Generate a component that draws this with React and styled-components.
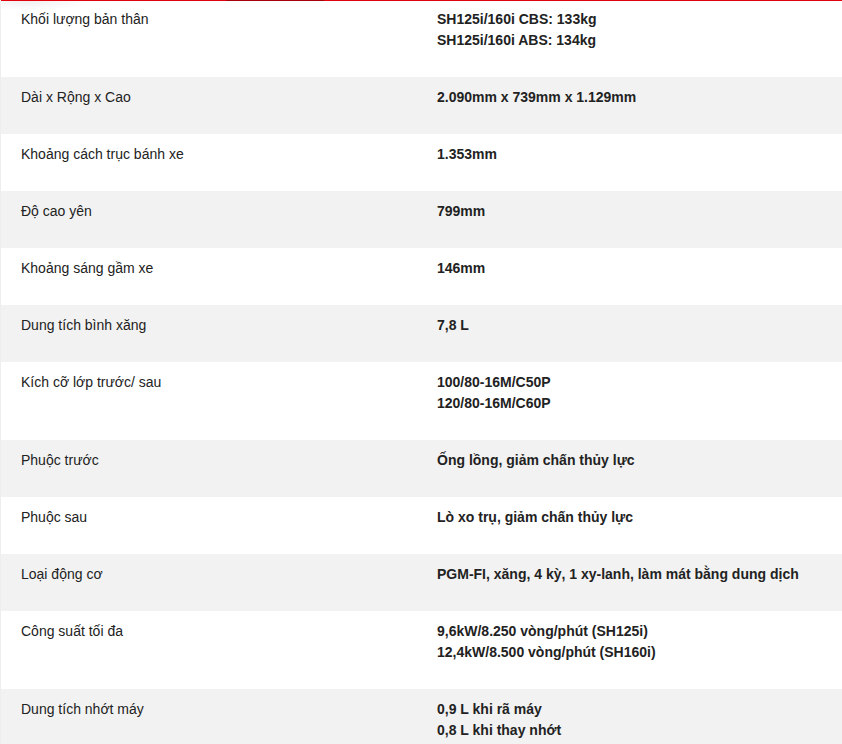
import styled, { createGlobalStyle } from 'styled-components';

const GlobalStyle = createGlobalStyle`
    html, body {
        margin: 0;
        padding: 0;
        background: #fff;
    }
    body {
        font-family: "Liberation Sans", Arial, sans-serif;
        color: #222;
    }
`;

// thông số kỹ thuật
const SPECS = [
    ['Khối lượng bản thân', ['SH125i/160i CBS: 133kg', 'SH125i/160i ABS: 134kg']],
    ['Dài x Rộng x Cao', ['2.090mm x 739mm x 1.129mm']],
    ['Khoảng cách trục bánh xe', ['1.353mm']],
    ['Độ cao yên', ['799mm']],
    ['Khoảng sáng gầm xe', ['146mm']],
    ['Dung tích bình xăng', ['7,8 L']],
    ['Kích cỡ lớp trước/ sau', ['100/80-16M/C50P', '120/80-16M/C60P']],
    ['Phuộc trước', ['Ống lồng, giảm chấn thủy lực']],
    ['Phuộc sau', ['Lò xo trụ, giảm chấn thủy lực']],
    ['Loại động cơ', ['PGM-FI, xăng, 4 kỳ, 1 xy-lanh, làm mát bằng dung dịch']],
    ['Công suất tối đa', ['9,6kW/8.250 vòng/phút (SH125i)', '12,4kW/8.500 vòng/phút (SH160i)']],
    ['Dung tích nhớt máy', ['0,9 L khi rã máy', '0,8 L khi thay nhớt']],
];

const App = () => {
    return (
        <>
            <GlobalStyle />
            <Wrapper>
                <TopLine />
                <Table>
                    {SPECS.map(([label, values], i) => (
                        <Row key={label} $odd={i % 2 === 1}>
                            <Label>{label}</Label>
                            <Value>
                                {values.map((v) => (
                                    <Line key={v}>{v}</Line>
                                ))}
                            </Value>
                        </Row>
                    ))}
                </Table>
            </Wrapper>
        </>
    );
};

export default App;

const Wrapper = styled.div`
    position: relative;
    width: 842px;
    height: 744px;
    overflow: hidden;
    border-left: 1px solid #eee;
    box-sizing: border-box;
`;

// vạch đỏ phía trên, nằm đè lên bảng
const TopLine = styled.div`
    position: absolute;
    top: 0;
    left: 0;
    right: 0;
    z-index: 1;
    height: 1px;
    background: linear-gradient(
        to right,
        #e3000f 0,
        #e3000f 225px,
        #a8000b 225px,
        #a8000b 323px,
        #e3000f 323px
    );

    &::after {
        content: '';
        position: absolute;
        left: 0;
        top: 1px;
        width: 90px;
        height: 10px;
        background: radial-gradient(ellipse at 30% 0%, rgba(0, 0, 0, 0.06), rgba(0, 0, 0, 0) 70%);
    }
`;

const Table = styled.div`
    display: flex;
    flex-direction: column;
    margin-top: -1px;
`;

const Row = styled.div`
    display: grid;
    grid-template-columns: 426px 1fr;
    background-color: ${(props) => (props.$odd ? '#f2f2f2' : '#fff')};
    padding: 10px 0 26px;
`;

const Label = styled.div`
    padding-left: 20px;
    font-size: 14px;
    line-height: 21px;
    color: #222;
`;

const Value = styled.div`
    padding-left: 10px;
    font-size: 14px;
    line-height: 21px;
    font-weight: 700;
    color: #222;
`;

const Line = styled.div``;
